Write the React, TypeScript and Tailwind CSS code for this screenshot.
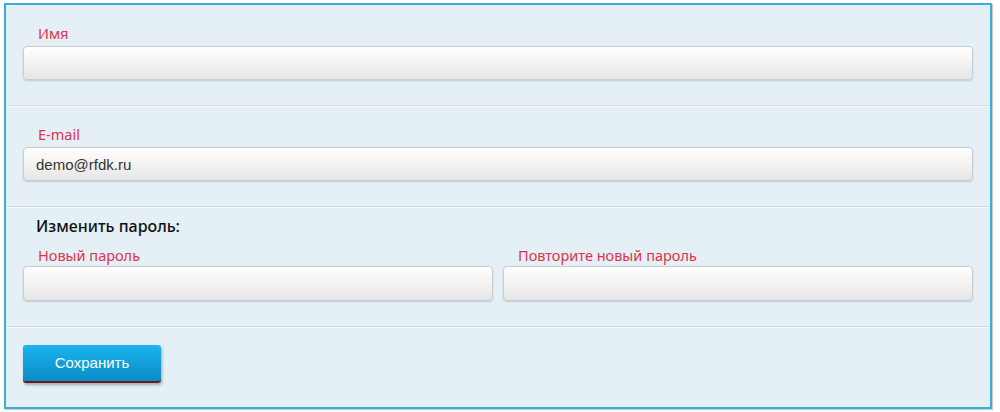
const labelFont = { fontFamily: "'Noto Sans', Lato, sans-serif" };

function Field({ label, value, tight }: { label: string; value?: string; tight?: boolean }) {
  return (
    <div className="flex flex-col">
      <label
        className={
          tight
            ? "mb-[2px] block h-[18px] pl-[15px] text-[14.5px] leading-[18px] text-[#e0324a]"
            : "mb-[4px] block h-[18px] pl-[15px] text-[14.5px] leading-[18px] text-[#e0324a]"
        }
        style={labelFont}
      >
        {label}
      </label>
      <input
        type="text"
        defaultValue={value}
        className={
          (tight ? "h-[35px] " : "h-[34px] ") +
          "w-full rounded-[4px] border border-[#c9cdd0] bg-gradient-to-b from-white to-[#e6e6e6] px-[12px] font-['Liberation_Sans',Arial,sans-serif] text-[15px] text-[#333] shadow-[0_1px_2px_rgba(0,0,0,0.15)] outline-none"
        }
      />
    </div>
  );
}

export default function App() {
  return (
    <div className="min-h-[412px] bg-white pt-[3px] pl-[4px]">
      <div className="w-[988px] border-2 border-[#3aaed6] bg-[#e4f0f6] shadow-[1px_1px_1px_rgba(0,0,0,0.2)]">
        <div className="border-b border-[#d3d8db] px-[17px] pt-[19px] pb-[25px] shadow-[0_1px_0_#f4f9fb]">
          <Field label="Имя" />
        </div>
        <div className="border-b border-[#d3d8db] px-[17px] pt-[19px] pb-[25px] shadow-[0_1px_0_#f4f9fb]">
          <Field label="E-mail" value="demo@rfdk.ru" />
        </div>
        <div className="border-b border-[#d3d8db] px-[17px] pt-[9px] pb-[25px] shadow-[0_1px_0_#f4f9fb]">
          <div
            className="mb-[10px] pl-[13px] text-[16px] leading-[20px] font-medium text-[#111]"
            style={labelFont}
          >
            Изменить пароль:
          </div>
          <div className="grid grid-cols-2 gap-[10px]">
            <Field label="Новый пароль" tight />
            <Field label="Повторите новый пароль" tight />
          </div>
        </div>
        <div className="px-[17px] pt-[18px] pb-[24px]">
          <button
            type="button"
            className="h-[38px] w-[138px] rounded-[3px] border-b-2 border-[#6a1b22] bg-gradient-to-b from-[#1bb4ee] to-[#0a8cc6] font-['Liberation_Sans',Arial,sans-serif] text-[15px] text-white shadow-[1px_2px_3px_rgba(0,0,0,0.3)]"
          >
            Сохранить
          </button>
        </div>
      </div>
    </div>
  );
}
